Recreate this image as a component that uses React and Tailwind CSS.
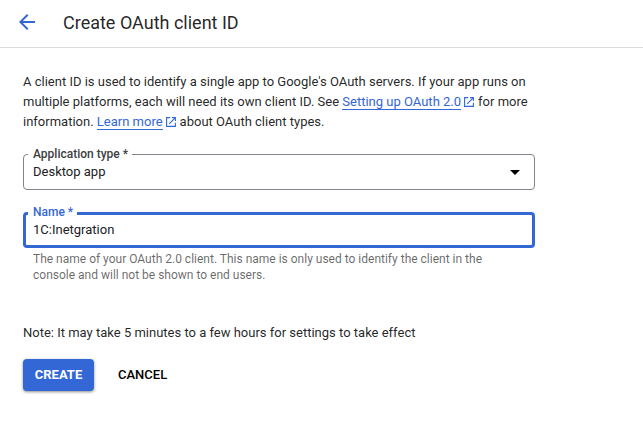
function LaunchIcon() {
  return (
    <svg viewBox="0 0 10 10" className="ml-[3px] mr-1 inline-block h-2.5 w-2.5 align-[-1px]" fill="none" stroke="#3367d6" strokeWidth="1.1">
      <path d="M4.2 0.6H0.6V9.4H9.4V5.8M6 0.6H9.4V4M9.4 0.6L3.2 6.8" />
    </svg>
  );
}

function DocLink({ children }) {
  return (
    <>
      <a className="border-b border-[#3367d6] text-[#3367d6]">{children}</a>
      <LaunchIcon />
    </>
  );
}

export default function App() {
  return (
    <div className="h-[426px] w-[643px] overflow-hidden bg-white font-['Roboto','Liberation_Sans',sans-serif] text-[13px] text-[#202124]">
      <header className="flex h-12 items-center border-b border-[#dadce0] pl-[19px]">
        <svg viewBox="0 0 16 16" className="-mt-[3px] h-4 w-4" fill="#3367d6">
          <path d="M16 7H3.83l5.59-5.59L8 0 0 8l8 8 1.41-1.41L3.83 9H16z" />
        </svg>
        <h1 className="-mt-px ml-7 whitespace-nowrap text-[18px] leading-6 text-black/87">Create OAuth client ID</h1>
      </header>
      <main className="flex flex-col items-start pl-[23px] pt-6">
        <div className="whitespace-nowrap leading-5 text-black/87">
          <p>A client ID is used to identify a single app to Google's OAuth servers. If your app runs on</p>
          <p>multiple platforms, each will need its own client ID. See <DocLink>Setting up OAuth 2.0</DocLink>for more</p>
          <p>information. <DocLink>Learn more</DocLink>about OAuth client types.</p>
        </div>

        <div className="relative mt-[22px] flex h-9 w-[512px] items-center justify-between rounded border border-[#80868b] pl-[9px] pr-[14px]">
          <label className="absolute -top-[9px] left-1 whitespace-nowrap bg-white pl-[5px] pr-1 text-[12px] font-medium leading-4 text-[#3c4043]">Application type *</label>
          <span>Desktop app</span>
          <svg viewBox="0 0 10 5" className="h-[5px] w-2.5" fill="#000"><path d="M0 0h10L5 5z" /></svg>
        </div>

        <div className="relative mt-[22px] flex h-9 w-[512px] items-center rounded border-3 border-[#3367d6] pl-[7px]">
          <label className="absolute -top-[11px] left-0.5 whitespace-nowrap bg-white pl-[5px] pr-1 text-[12px] font-medium leading-4 text-[#3367d6]">Name *</label>
          <span>1C:Inetgration</span>
        </div>
        <div className="mt-[3px] whitespace-nowrap pl-2.5 text-[12px] leading-4 text-black/60">
          <p>The name of your OAuth 2.0 client. This name is only used to identify the client in the</p>
          <p>console and will not be shown to end users.</p>
        </div>

        <p className="mt-10 whitespace-nowrap leading-5 text-black/87">Note: It may take 5 minutes to a few hours for settings to take effect</p>
        <div className="mt-4 flex items-center">
          <button className="h-8 w-[71px] rounded-[4px] bg-[#3367d6] font-bold text-white shadow-[0_1px_3px_rgba(0,0,0,0.45)]">CREATE</button>
          <button className="ml-6 font-medium text-black">CANCEL</button>
        </div>
      </main>
    </div>
  );
}
